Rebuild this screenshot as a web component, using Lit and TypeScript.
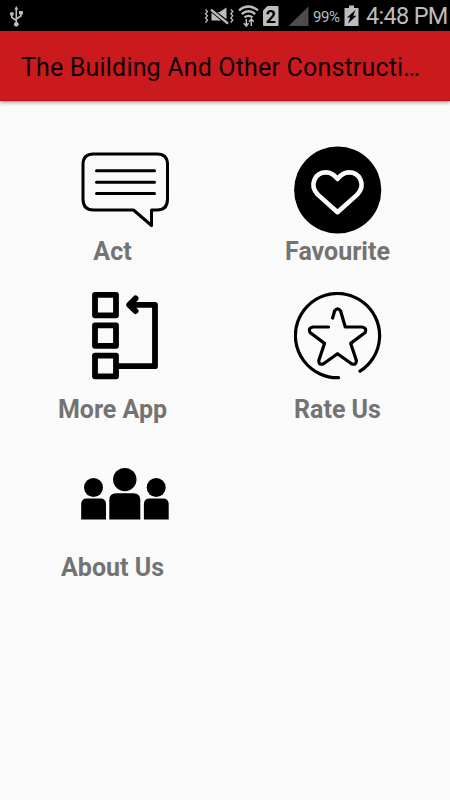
import { LitElement, html, css, svg } from "lit";
import { customElement } from "lit/decorators.js";

const icons = {
  act: svg`<g fill="none" stroke="#000" stroke-width="3" stroke-linecap="round" stroke-linejoin="round">
    <path d="M12.5 8H76Q86.500 8 86.500 18.500V53Q86.500 64 76 64H70.500V79.500L52.500 64H12.500Q2 64 2 53V18.500Q2 8 12.500 8Z"/>
    <path d="M15.500 24.800H73.500M15.500 36.300H73.500M15.500 47.600H73.500"/></g>`,
  favourite: svg`<circle cx="43.700" cy="44" r="43.600"/>
    <path d="M43.500 66.200L23.800 48.600C14.500 38.500 21.500 26.400 32 26.400Q38.600 26.400 43.500 33Q48.400 26.400 55 26.400C65.500 26.400 72.500 38.500 63.200 48.600Z" fill="none" stroke="#fafafa" stroke-width="4.600" stroke-linejoin="round"/>`,
  more: svg`<g fill="none" stroke="#000" stroke-width="5.800" stroke-linejoin="round">
    <path d="M14 2.900H35V23.300H14ZM14 33.300H35V53.800H14ZM14 63.700H35V84.300H14ZM36 74.200H74V12.800H51"/>
    <path d="M54.500 6.500L48.300 12.800L54.500 19" stroke-linecap="round" stroke-width="6"/></g>`,
  rate: svg`<g fill="none" stroke="#000" stroke-width="3.200" stroke-linecap="round" stroke-linejoin="round">
    <path d="M44.500 85.700A42.100 42.100 0 1 1 66 79.200"/>
    <path d="M38.600 26L40.600 19Q43.500 14.800 46.600 19L51.300 35H68Q73.300 36 71.200 40.500L56.700 51.400L62.400 68.500Q62.500 73.500 57.500 71.800L43.500 61.700L29.500 71.800Q24.500 73.500 24.800 68.500L30.500 51.400L16 40.500Q13.700 36 19 35H34.500"/></g>`,
  about: svg`<circle cx="43.800" cy="29.600" r="11.700"/><circle cx="12.500" cy="37.500" r="9.500"/><circle cx="75.200" cy="37.500" r="9.500"/>
    <path d="M28.300 69.400V50Q28.300 43.200 35.300 43.200H52.300Q59.300 43.200 59.300 50V69.400ZM.2 69.400V54Q.2 48.400 6 48.400H19.200Q25 48.400 25 54V69.400ZM62.900 69.400V54Q62.900 48.400 68.700 48.400H81.900Q87.700 48.400 87.700 54V69.400Z"/>`,
};

@customElement("menu-tile")
class MenuTile extends LitElement {
  static properties = { icon: {}, label: {} };
  declare icon: keyof typeof icons;
  declare label: string;
  static styles = css`
    :host { display: flex; flex-direction: column; align-items: center; width: 180px; }
    svg { display: block; width: 88px; height: 88px; flex: none; }
    .label { font: bold 25px/34px Roboto, sans-serif; color: #737373; white-space: nowrap;
      margin: var(--label-gap, 13px) var(--label-shift, 25px) 0 0; }
  `;
  render() {
    return html`<svg viewBox="0 0 88 88">${icons[this.icon]}</svg><div class="label">${this.label}</div>`;
  }
}

@customElement("status-bar")
class StatusBar extends LitElement {
  static styles = css`
    :host { display: flex; height: 31px; background: #000; color: #bdbdbd; font-family: Roboto, sans-serif; }
    svg { display: block; width: 310px; height: 31px; flex: none; }
    .percent { width: 34px; margin-left: 3px; font-size: 15px; line-height: 34px; letter-spacing: -0.45px; }
    .battery { width: 15px; margin-right: 7px; margin-left: -3px; }
    .time { font-size: 23.500px; line-height: 33px; letter-spacing: -0.7px; white-space: nowrap; }
  `;
  render() {
    return html`
      <svg viewBox="0 0 310 31">
        <g fill="none" stroke="#bdbdbd" stroke-width="1.600">
          <path d="M16.300 8V24M11.800 14V17.500L16.300 20.500M20.900 13V16L16.300 19"/>
          <path d="M205.500 9.500L207.500 11.600L205.500 13.700L207.500 15.800L205.500 17.900L207.500 20L205.500 22.500M230.800 9.500L232.800 11.600L230.800 13.700L232.800 15.800L230.800 17.900L232.800 20L230.800 22.500" stroke-width="1.300"/>
          <path d="M239 10.300Q248.500 2.800 258 10.300M241.800 14Q248.500 8.500 255.200 14M244.500 17.400Q248.500 14.300 252.500 17.400" stroke-width="2.300"/>
          <path d="M246.300 19V26M243.800 23.300L246.300 26L248.500 23.300M251.300 26V19M249 21.700L251.300 19L253.800 21.700" stroke-width="1.500"/>
        </g>
        <g fill="#bdbdbd">
          <path d="M16.300 6L18.300 9.500H14.300ZM19 11H22.900V14.500H19Z"/><circle cx="11.800" cy="14" r="2"/><circle cx="16.300" cy="24.300" r="2.400"/>
          <path d="M211.500 12.300L221.500 20.500H211.500ZM217 12H219.500L226.500 7.500V19.300Z"/>
          <path d="M267.500 6H277.500Q278.500 6 278.500 7V25Q278.500 26 277.500 26H264Q263 26 263 25V10.500Z"/>
        </g>
        <path d="M210.500 9.200L228.500 24" stroke="#000" stroke-width="4.200"/>
        <path d="M211 9.600L228 23.600" stroke="#bdbdbd" stroke-width="2.500"/>
        <path d="M308.500 6.500V26H288.500Z" fill="#4c4c4c"/>
        <text x="270.800" y="22.700" text-anchor="middle" font-size="18" font-weight="bold" font-family="Roboto, sans-serif">2</text>
      </svg>
      <div class="percent">99%</div>
      <svg class="battery" viewBox="0 0 15 31">
        <path d="M5 5.500H10V8H14.500V26H.500V8H5Z" fill="#bdbdbd"/>
        <path d="M11.500 10L3 17.500H6.200L4 23.500L12.500 15.800H9.300Z"/>
      </svg>
      <div class="time">4:48 PM</div>`;
  }
}

@customElement("app-root")
class AppRoot extends LitElement {
  static styles = css`
    :host { display: flex; flex-direction: column; height: 800px; background: #fafafa; overflow: hidden; }
    status-bar { flex: none; }
    header { flex: none; height: 70px; box-sizing: border-box; padding: 0 29px 0 21px; background: #cb1a1d;
      border-bottom: 1px solid #c9090d; box-shadow: 0 1px 4px rgba(0,0,0,.5); z-index: 1; }
    h1 { margin: 0; font: 400 25px/74px Roboto, sans-serif; letter-spacing: .18px; color: #0d0102; white-space: nowrap; }
    main { display: grid; grid-template-columns: 213px 180px; grid-template-rows: 146px 158px 158px; padding: 45px 0 0 35px; }
    .first { --label-gap: 1px; }
    .right { --label-shift: 1px; }
  `;
  render() {
    return html`
      <status-bar></status-bar>
      <header><h1>The Building And Other Constructi…</h1></header>
      <main>
        <menu-tile class="first" icon="act" label="Act"></menu-tile>
        <menu-tile class="first right" icon="favourite" label="Favourite"></menu-tile>
        <menu-tile icon="more" label="More App"></menu-tile>
        <menu-tile class="right" icon="rate" label="Rate Us"></menu-tile>
        <menu-tile icon="about" label="About Us"></menu-tile>
      </main>`;
  }
}
